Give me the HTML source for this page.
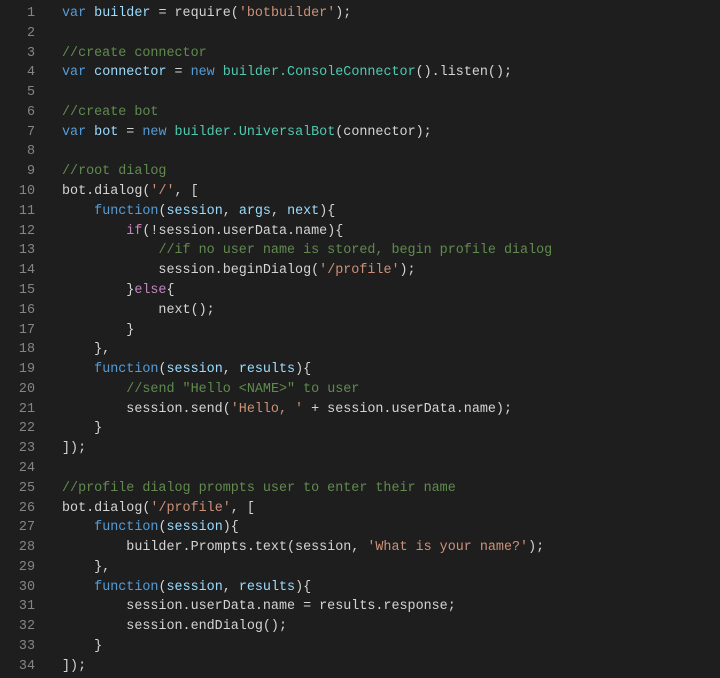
<!DOCTYPE html>
<html><head><meta charset="utf-8"><style>
html,body{margin:0;padding:0;background:#1e1e1e;width:720px;height:678px;overflow:hidden}
.w{position:relative;padding-top:4px;font-family:"Liberation Mono",monospace;font-size:13.4px;line-height:19.79px;color:#d4d4d4}
.l{height:19.79px;position:relative}
.n{position:absolute;left:0;width:35px;text-align:right;color:#858585}
.c{position:absolute;left:62px;white-space:pre}
.k{color:#569cd6}.v{color:#9cdcfe}.s{color:#ce9178}.m{color:#608b4e}.t{color:#4ec9b0}.p{color:#c586c0}
</style></head><body><div class="w">
<div class="l"><span class="n">1</span><span class="c"><span class="k">var</span> <span class="v">builder</span> = require(<span class="s">'botbuilder'</span>);</span></div>
<div class="l"><span class="n">2</span></div>
<div class="l"><span class="n">3</span><span class="c"><span class="m">//create connector</span></span></div>
<div class="l"><span class="n">4</span><span class="c"><span class="k">var</span> <span class="v">connector</span> = <span class="k">new</span> <span class="t">builder.ConsoleConnector</span>().listen();</span></div>
<div class="l"><span class="n">5</span></div>
<div class="l"><span class="n">6</span><span class="c"><span class="m">//create bot</span></span></div>
<div class="l"><span class="n">7</span><span class="c"><span class="k">var</span> <span class="v">bot</span> = <span class="k">new</span> <span class="t">builder.UniversalBot</span>(connector);</span></div>
<div class="l"><span class="n">8</span></div>
<div class="l"><span class="n">9</span><span class="c"><span class="m">//root dialog</span></span></div>
<div class="l"><span class="n">10</span><span class="c">bot.dialog(<span class="s">'/'</span>, [</span></div>
<div class="l"><span class="n">11</span><span class="c">    <span class="k">function</span>(<span class="v">session</span>, <span class="v">args</span>, <span class="v">next</span>){</span></div>
<div class="l"><span class="n">12</span><span class="c">        <span class="p">if</span>(!session.userData.name){</span></div>
<div class="l"><span class="n">13</span><span class="c">            <span class="m">//if no user name is stored, begin profile dialog</span></span></div>
<div class="l"><span class="n">14</span><span class="c">            session.beginDialog(<span class="s">'/profile'</span>);</span></div>
<div class="l"><span class="n">15</span><span class="c">        }<span class="p">else</span>{</span></div>
<div class="l"><span class="n">16</span><span class="c">            next();</span></div>
<div class="l"><span class="n">17</span><span class="c">        }</span></div>
<div class="l"><span class="n">18</span><span class="c">    },</span></div>
<div class="l"><span class="n">19</span><span class="c">    <span class="k">function</span>(<span class="v">session</span>, <span class="v">results</span>){</span></div>
<div class="l"><span class="n">20</span><span class="c">        <span class="m">//send "Hello &lt;NAME&gt;" to user</span></span></div>
<div class="l"><span class="n">21</span><span class="c">        session.send(<span class="s">'Hello, '</span> + session.userData.name);</span></div>
<div class="l"><span class="n">22</span><span class="c">    }</span></div>
<div class="l"><span class="n">23</span><span class="c">]);</span></div>
<div class="l"><span class="n">24</span></div>
<div class="l"><span class="n">25</span><span class="c"><span class="m">//profile dialog prompts user to enter their name</span></span></div>
<div class="l"><span class="n">26</span><span class="c">bot.dialog(<span class="s">'/profile'</span>, [</span></div>
<div class="l"><span class="n">27</span><span class="c">    <span class="k">function</span>(<span class="v">session</span>){</span></div>
<div class="l"><span class="n">28</span><span class="c">        builder.Prompts.text(session, <span class="s">'What is your name?'</span>);</span></div>
<div class="l"><span class="n">29</span><span class="c">    },</span></div>
<div class="l"><span class="n">30</span><span class="c">    <span class="k">function</span>(<span class="v">session</span>, <span class="v">results</span>){</span></div>
<div class="l"><span class="n">31</span><span class="c">        session.userData.name = results.response;</span></div>
<div class="l"><span class="n">32</span><span class="c">        session.endDialog();</span></div>
<div class="l"><span class="n">33</span><span class="c">    }</span></div>
<div class="l"><span class="n">34</span><span class="c">]);</span></div>
</div></body></html>
